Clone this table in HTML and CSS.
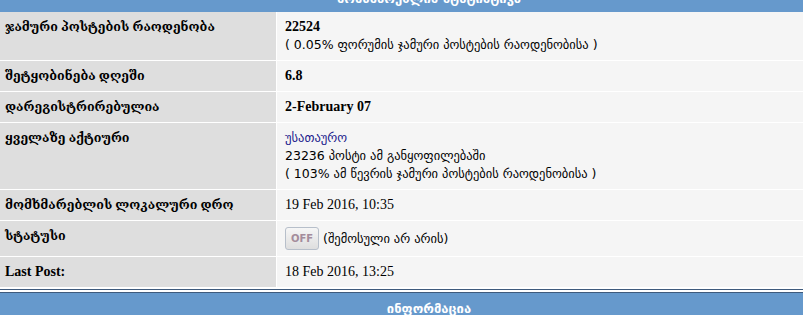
FILE: index.html
```html
<!DOCTYPE html>
<html lang="ka">
<head>
<meta charset="utf-8">
<title>პროფილი</title>
<link rel="stylesheet" href="styles.css">
</head>
<body>
<div class="page">
  <div class="bar bar-top"><span>მომხმარებლის სტატისტიკა</span></div>
  <div class="table">
    <div class="row">
      <div class="label">ჯამური პოსტების რაოდენობა</div>
      <div class="value"><div class="strong">22524</div><div class="note">( 0.05% ფორუმის ჯამური პოსტების რაოდენობისა )</div></div>
    </div>
    <div class="row">
      <div class="label">შეტყობინება დღეში</div>
      <div class="value"><div class="strong">6.8</div></div>
    </div>
    <div class="row">
      <div class="label">დარეგისტრირებულია</div>
      <div class="value"><div class="strong">2-February 07</div></div>
    </div>
    <div class="row">
      <div class="label">ყველაზე აქტიური</div>
      <div class="value">
        <div class="note"><a class="link" href="#">უსათაურო</a></div>
        <div class="note">23236 პოსტი ამ განყოფილებაში</div>
        <div class="note">( 103% ამ წევრის ჯამური პოსტების რაოდენობისა )</div>
      </div>
    </div>
    <div class="row">
      <div class="label">მომხმარებლის ლოკალური დრო</div>
      <div class="value">19 Feb 2016, 10:35</div>
    </div>
    <div class="row">
      <div class="label">სტატუსი</div>
      <div class="value status"><span class="off">OFF</span><span class="note">(შემოსული არ არის)</span></div>
    </div>
    <div class="row">
      <div class="label label-latin">Last Post:</div>
      <div class="value">18 Feb 2016, 13:25</div>
    </div>
  </div>
  <div class="rule"></div>
  <div class="bar bar-bottom">ინფორმაცია</div>
</div>
</body>
</html>
```
FILE: styles.css
```css
html, body {
  margin: 0;
  padding: 0;
  background: #ffffff;
  overflow: hidden;
}

.page {
  width: 858px;
  font-family: "Liberation Serif", "DejaVu Serif", serif;
  color: #000;
}

.bar {
  background: #6699cc;
  color: #fff;
  font-weight: bold;
  text-align: center;
  font-family: "DejaVu Sans", sans-serif;
  font-size: 13px;
}

.bar-top {
  height: 12px;
  overflow: hidden;
  display: flex;
  justify-content: center;
  align-items: flex-end;
}

.bar-top span {
  line-height: 16px;
  margin-bottom: 5px;
  white-space: nowrap;
}

.bar-bottom {
  padding: 7px 0 10px;
  line-height: 18px;
}

.table {
  background: #fff;
}

.row {
  display: grid;
  grid-template-columns: 276px 1fr;
  column-gap: 1px;
  border-bottom: 1px solid #fff;
}

.label {
  background: #dedede;
  padding: 6px 5px;
  font-weight: bold;
  font-size: 12.5px;
  line-height: 18px;
}

.label-latin {
  font-size: 14px;
}

.value {
  background: #f5f5f5;
  padding: 6px 8px;
  font-size: 14px;
  line-height: 18px;
}

.strong {
  font-weight: bold;
  font-size: 14px;
}

.note {
  font-family: "DejaVu Sans", sans-serif;
  font-size: 12.5px;
  line-height: 18px;
}

.link {
  color: #1a1a8c;
  text-decoration: none;
}

.status {
  display: flex;
  align-items: center;
  gap: 4px;
}

.off {
  display: inline-block;
  width: 32px;
  height: 21px;
  line-height: 21px;
  text-align: center;
  border: 1px solid #b7bfca;
  border-radius: 3px;
  background: linear-gradient(#f6f6f6, #dedede);
  color: #a48c9c;
  font-family: "DejaVu Sans", sans-serif;
  font-size: 10px;
  font-weight: bold;
}

.rule {
  margin-top: 1px;
  height: 2px;
  border-top: 1px solid #3e5a7c;
  border-bottom: 1px solid #3e5a7c;
  background: #fff;
}
```
